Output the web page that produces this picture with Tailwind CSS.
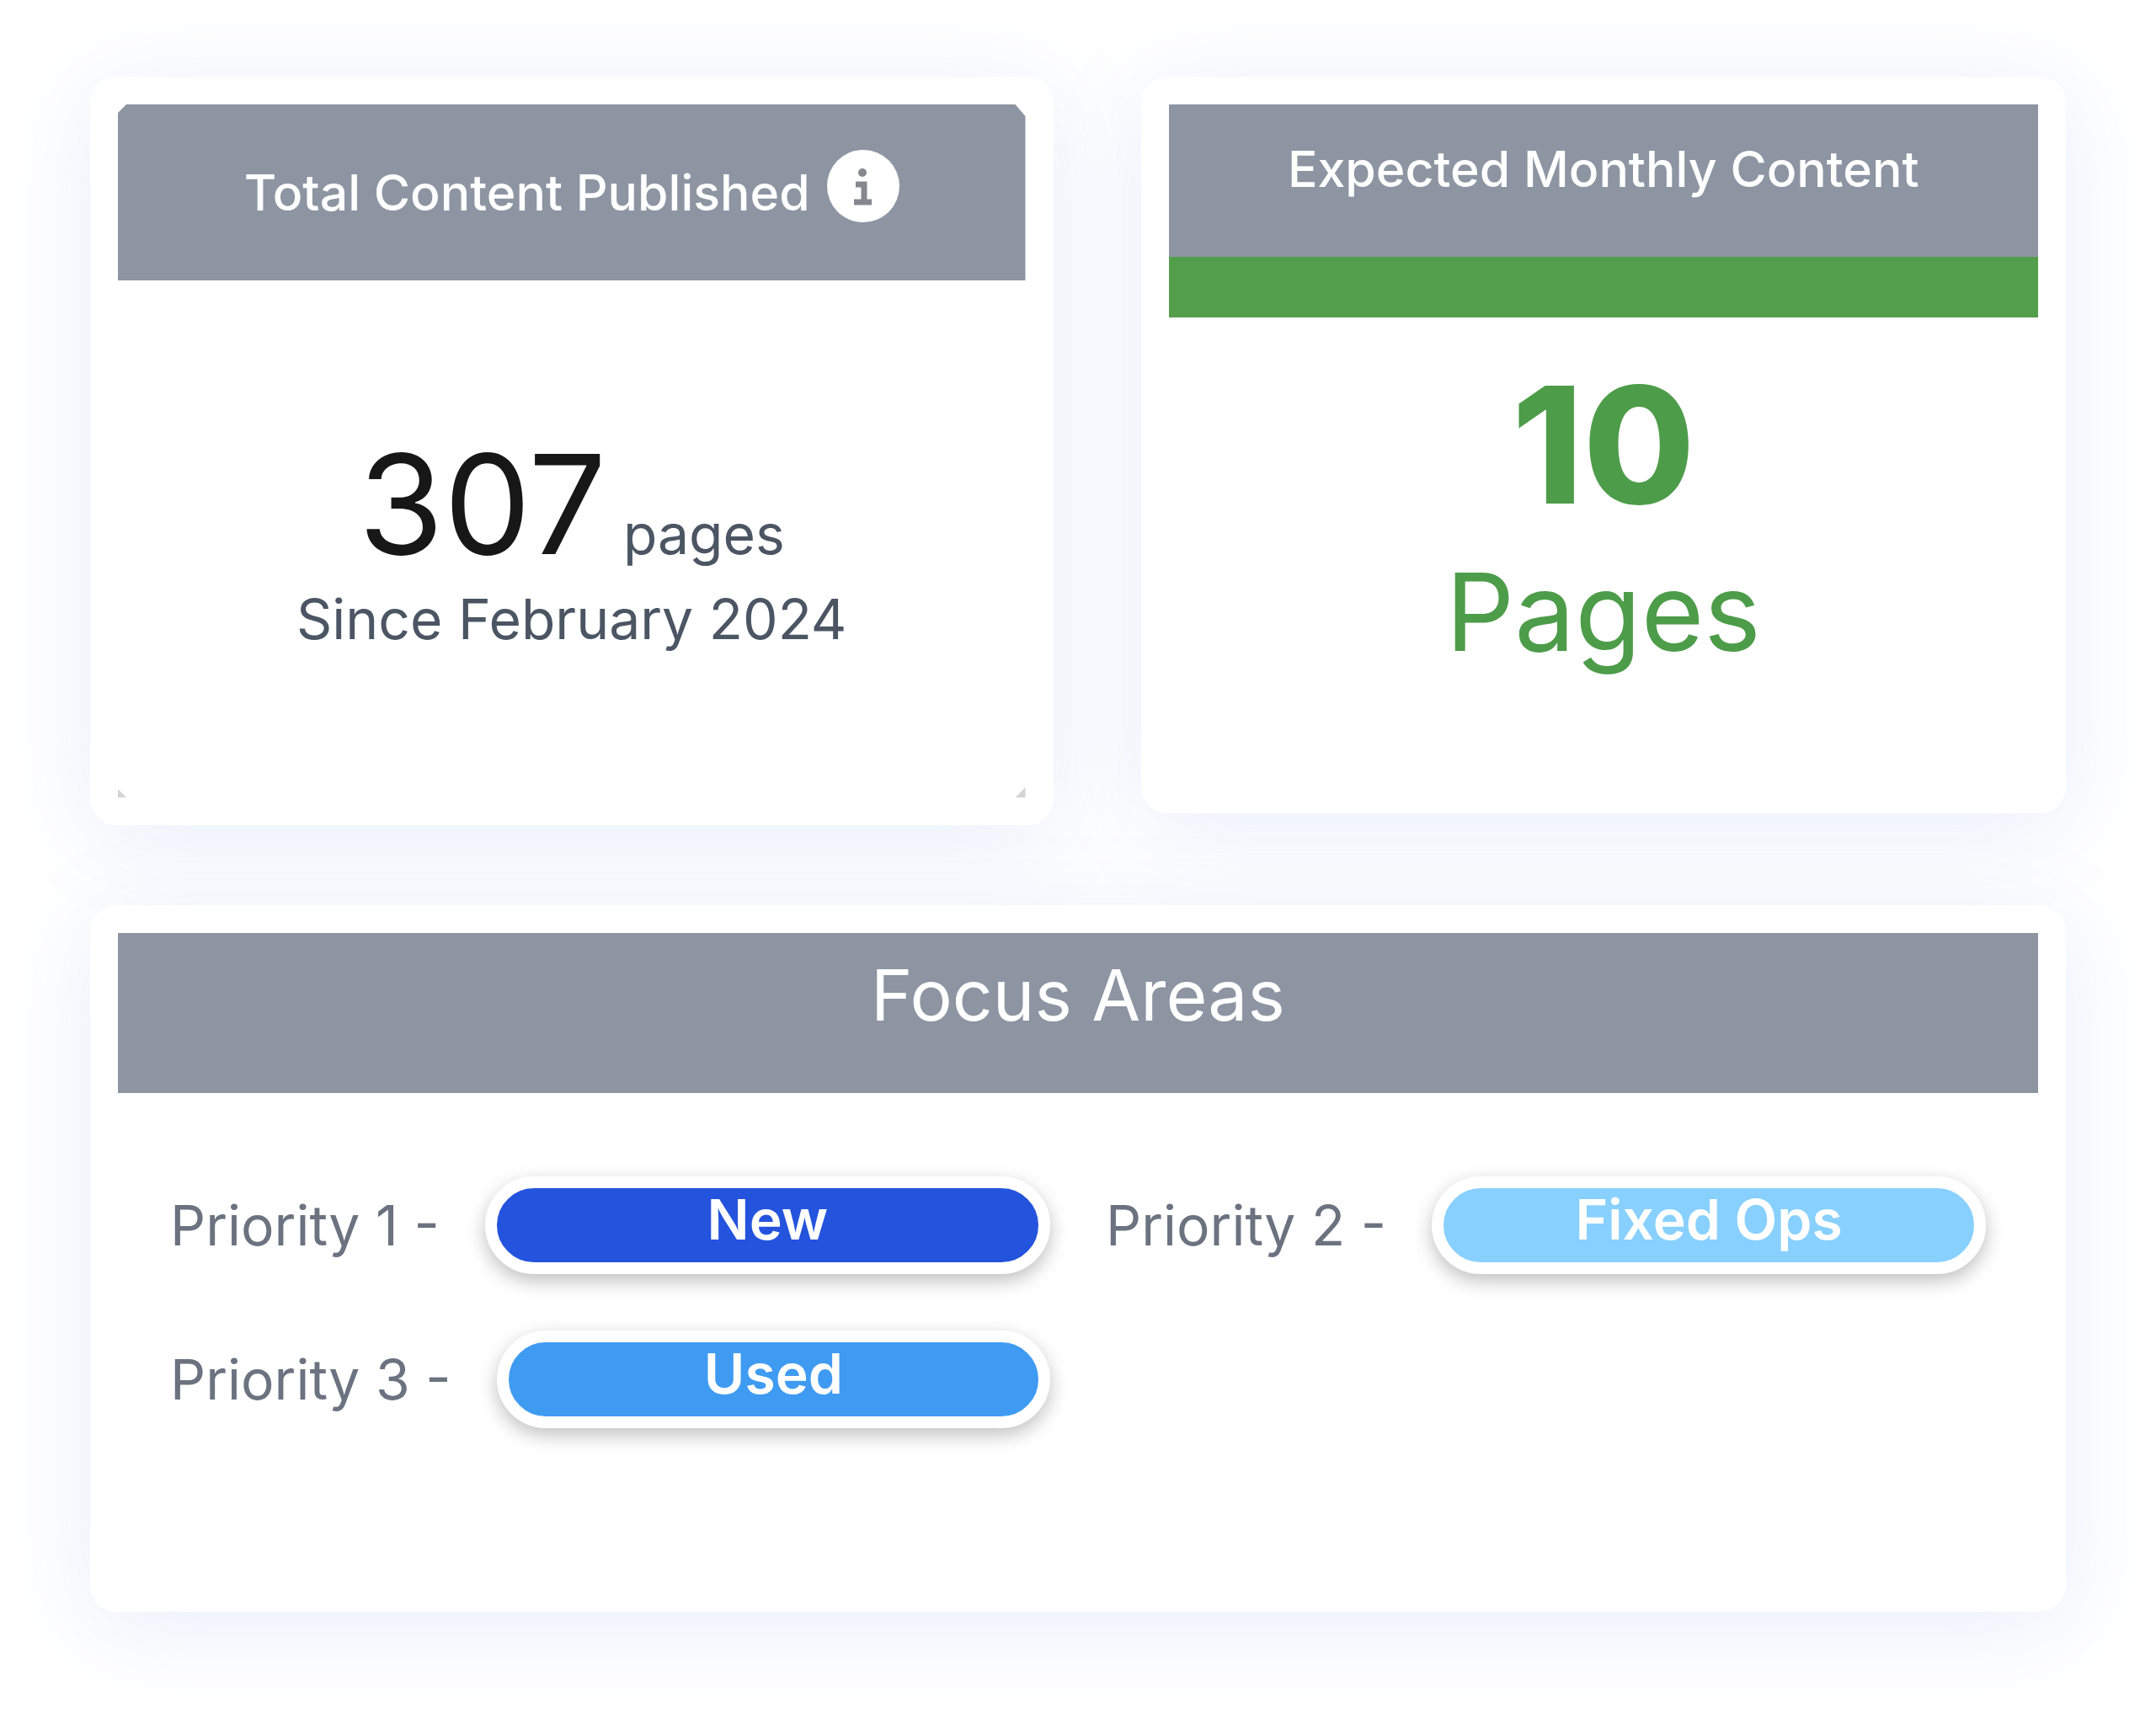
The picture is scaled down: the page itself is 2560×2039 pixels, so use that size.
<!DOCTYPE html>
<html lang="en">
<head>
  <meta charset="UTF-8">
  <meta name="viewport" content="width=device-width, initial-scale=1.0">
  <title>Content Overview</title>
  <script src="https://cdn.jsdelivr.net/npm/@tailwindcss/browser@4"></script>
</head>
<body class="bg-white font-['Inter',sans-serif]">
  <main class="isolate grid grid-cols-[1143fr_1098fr] items-start gap-x-[104px] px-[107px] pt-[91px] pb-[124px]">

    <!-- Total content -->
    <section class="relative rounded-[32px] bg-white p-[33px] before:absolute before:inset-0 before:-z-10 before:rounded-[32px] before:shadow-[0_16px_110px_rgba(80,120,220,0.13)]">
      <div class="relative">
        <header class="flex h-[209px] items-center justify-center gap-5 bg-[#8d95a2] text-white [clip-path:polygon(10px_0,calc(100%-12px)_0,100%_14px,100%_100%,0_100%,0_10px)]">
          <h2 class="text-[59px] leading-[64px] font-medium">Total Content Published</h2>
          <button type="button" aria-label="About total content" class="mb-4 size-[86px] shrink-0">
            <svg viewBox="0 0 86 86" class="size-full">
              <circle cx="43" cy="43" r="43" fill="#fff"/>
              <circle cx="42" cy="27" r="5" fill="#85898f"/>
              <path d="M34 41h10v21M32 62h21" fill="none" stroke="#85898f" stroke-width="7"/>
            </svg>
          </button>
        </header>
        <div class="flex flex-col items-center gap-4 pt-[186px] pb-[172px] text-[#4b5563]">
          <p class="flex items-baseline gap-5">
            <span class="text-[164px] leading-[160px] text-[#171717]">307</span>
            <span class="text-[66px] leading-[80px]">pages</span>
          </p>
          <p class="text-[66px] leading-[80px]">Since February 2024</p>
        </div>
        <!-- corner marks -->
        <span class="absolute bottom-0 left-0 size-[10px] bg-[#d4d4d4] [clip-path:polygon(0_0,100%_100%,0_100%)]"></span>
        <span class="absolute right-0 bottom-0 size-[12px] bg-[#d4d4d4] [clip-path:polygon(100%_0,100%_100%,0_100%)]"></span>
      </div>
    </section>

    <!-- Monthly content -->
    <section class="relative rounded-[32px] bg-white p-[33px] before:absolute before:inset-0 before:-z-10 before:rounded-[32px] before:shadow-[0_16px_110px_rgba(80,120,220,0.13)]">
      <header class="flex h-[253px] items-center justify-center border-b-[72px] border-[#539e4b] bg-[#8d95a2] pb-7 text-white">
        <h2 class="text-[59px] leading-[64px] font-medium">Expected Monthly Content</h2>
      </header>
      <div class="flex flex-col items-center gap-10 pt-[56px] pb-[142px] text-[#4d9c49]">
        <p class="text-[192px] leading-[190px] font-extrabold">10</p>
        <p class="text-[128px] leading-[128px]">Pages</p>
      </div>
    </section>

    <!-- Focus areas -->
    <section class="relative col-span-2 mt-[95px] rounded-[32px] bg-white p-[33px] before:absolute before:inset-0 before:-z-10 before:rounded-[32px] before:shadow-[0_16px_110px_rgba(80,120,220,0.13)]">
      <header class="flex h-[190px] items-center justify-center bg-[#8d95a2] pb-[42px] text-white">
        <h2 class="text-[84px] leading-[80px]">Focus Areas</h2>
      </header>
      <ul class="grid grid-cols-2 gap-x-[66px] gap-y-[67px] px-[62px] pt-[99px] pb-[185px] text-[66px] leading-[80px] text-[#6b7280]">
        <li class="flex items-center gap-[54px]">
          <span>Priority 1 -</span>
          <span class="flex h-[116px] flex-1 items-center justify-center rounded-full border-14 border-white bg-[#2453dd] pb-[14px] font-semibold text-white shadow-[0_8px_22px_rgba(0,0,0,0.25)]">New</span>
        </li>
        <li class="flex items-center gap-[54px]">
          <span>Priority 2 -</span>
          <span class="flex h-[116px] flex-1 items-center justify-center rounded-full border-14 border-white bg-[#88d0ff] pb-[14px] font-semibold text-white shadow-[0_8px_22px_rgba(0,0,0,0.25)]">Fixed Ops</span>
        </li>
        <li class="flex items-center gap-[54px]">
          <span>Priority 3 -</span>
          <span class="flex h-[116px] flex-1 items-center justify-center rounded-full border-14 border-white bg-[#3f9bf2] pb-[14px] font-semibold text-white shadow-[0_8px_22px_rgba(0,0,0,0.25)]">Used</span>
        </li>
      </ul>
    </section>

  </main>
</body>
</html>
